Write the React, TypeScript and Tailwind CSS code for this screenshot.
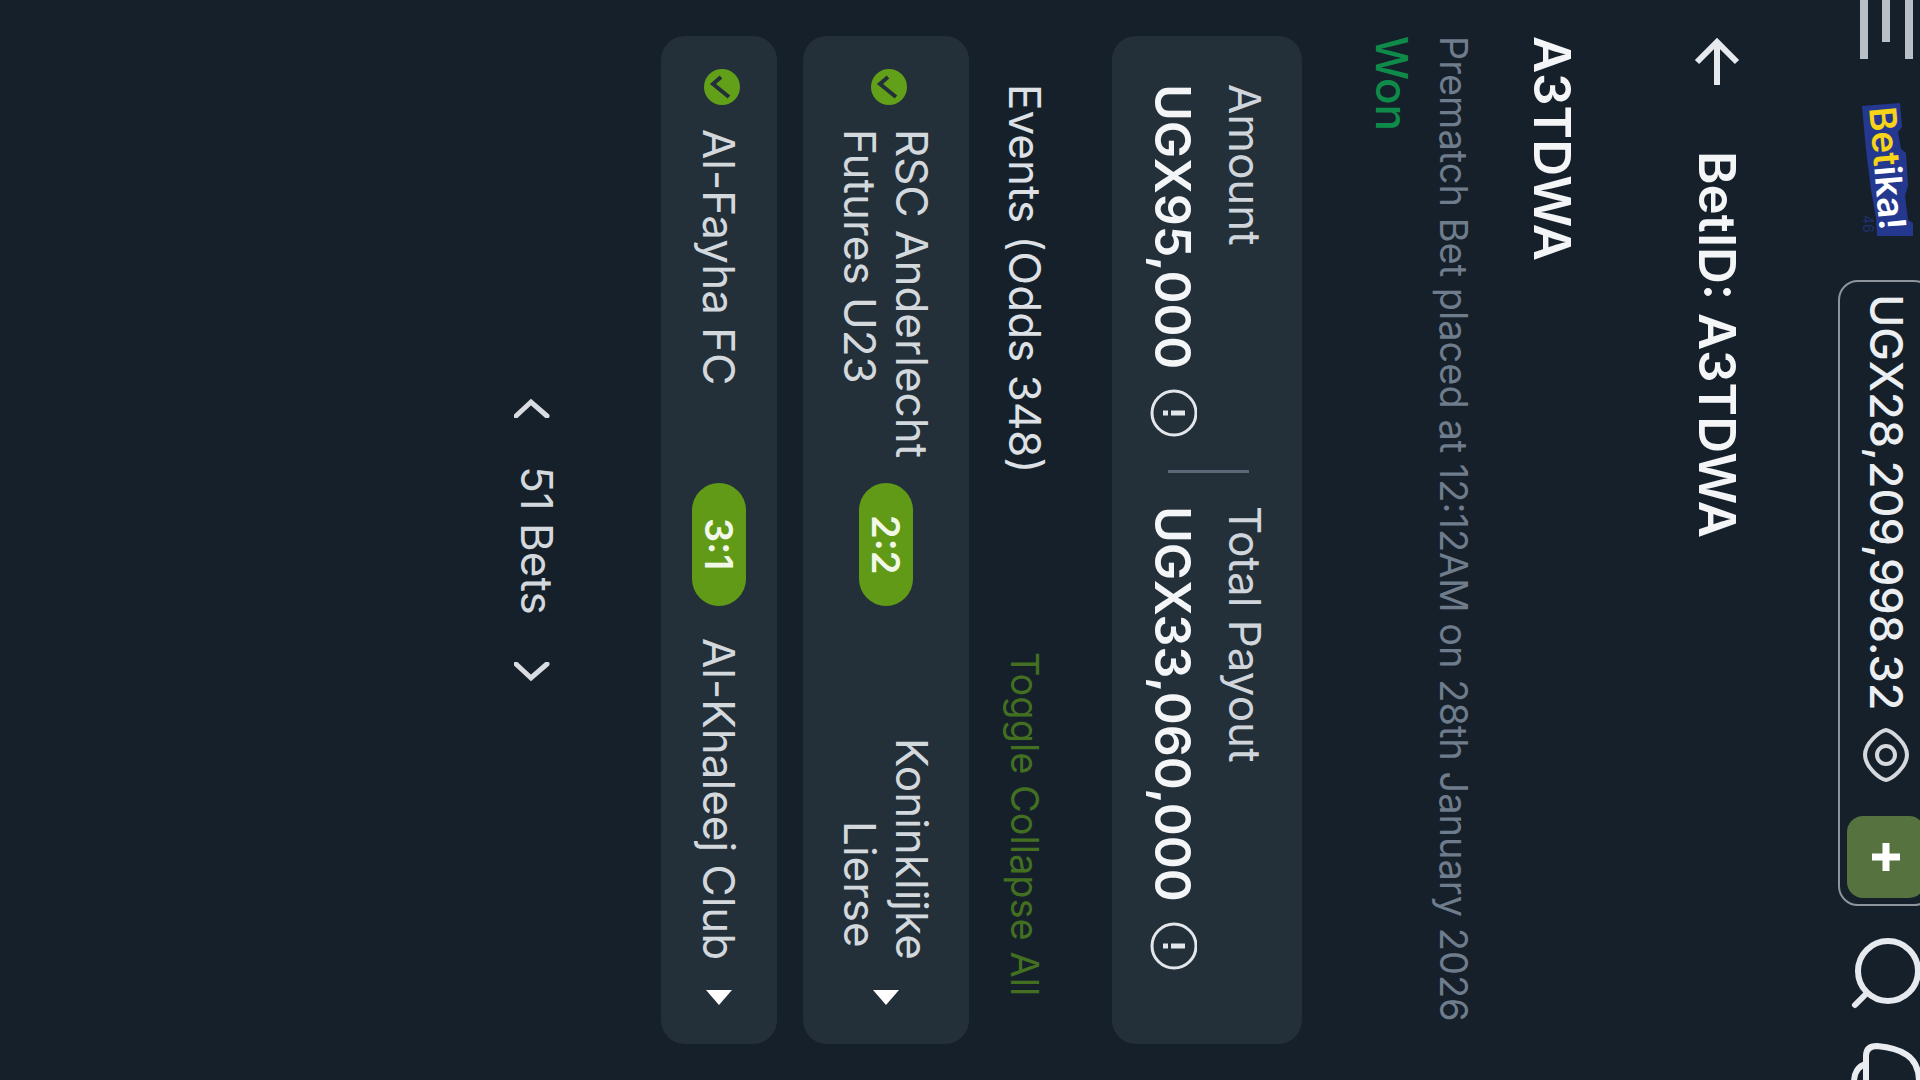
import type { ReactNode } from 'react';

const events = [
  { home: 'RSC Anderlecht Futures U23', away: 'Koninklijke Lierse\u00a0', score: '2:2' },
  { home: 'Al-Fayha FC', away: 'Al-Khaleej Club', score: '3:1' },
];

function Logo() {
  return (
    <svg width="60" height="140" viewBox="0 0 60 140" className="block shrink-0 [writing-mode:horizontal-tb]">
      <path
        d="M6 6 L44 3 L46 27 L42 32 L45 49 L50 53 L52 86 L49 96 L52 120 L57 123 L57 136 L21 136 L20 118 L15 90 L10 50 Z"
        fill="#24388f"
      />
      <text
        transform="translate(13 8) rotate(85)"
        fontFamily="Inter, sans-serif"
        fontSize="37"
        fontWeight="600"
        fill="#fff"
      >
        <tspan fill="#f7d417">Bet</tspan>ika!
      </text>
      <text transform="translate(7 115) rotate(90)" fontFamily="Inter, sans-serif" fontSize="14" fill="#20306f">
        46
      </text>
    </svg>
  );
}

function InfoIcon() {
  return (
    <svg width="48" height="48" viewBox="0 0 48 48" className="block shrink-0">
      <circle cx="25" cy="24" r="22" fill="none" stroke="#e3e7eb" strokeWidth="3" />
      <path d="M36 24 H22" stroke="#e3e7eb" strokeWidth="5" />
      <path d="M19 24 H14" stroke="#e3e7eb" strokeWidth="5" />
    </svg>
  );
}

function Header() {
  return (
    <header className="flex items-center w-[96px] -mr-[14px] text-[#eceff2]">
      <button aria-label="Menu" className="shrink-0">
        <svg width="54" height="59" viewBox="0 0 54 59" className="block">
          <path d="M5 0 V59 M27 0 V42 M50 0 V59" stroke="#b9bfc6" strokeWidth="8" />
        </svg>
      </button>

      <a href="/" aria-label="Betika" className="mt-[41px] shrink-0">
        <Logo />
      </a>

      {/* Balance */}
      <div className="flex items-center shrink-0 w-full mt-10 pt-3 pb-[6px] border-2 border-[#8d949c] rounded-[20px]">
        <span className="text-[45px] leading-[56px] font-medium">UGX28,209,998.32</span>
        <button aria-label="Hide balance" className="mt-[18px] shrink-0">
          <svg width="46" height="54" viewBox="0 0 46 54" fill="none" stroke="#d5d9de" strokeWidth="4" className="block">
            <path d="M23 2 C29 3 44 15 44 27 C44 39 29 51 23 52 C17 51 2 39 2 27 C2 15 17 3 23 2 Z" />
            <circle cx="23" cy="27" r="9" />
          </svg>
        </button>
        <button
          aria-label="Deposit"
          className="flex items-center justify-center shrink-0 w-[78px] h-[82px] mt-[34px] rounded-2xl bg-[#56733f]"
        >
          <svg width="28" height="28" viewBox="0 0 28 28" className="block">
            <path d="M14 0 V28 M0 14 H28" stroke="#fff" strokeWidth="7" />
          </svg>
        </button>
      </div>

      <button aria-label="Search" className="mt-8 shrink-0">
        <svg width="72" height="72" viewBox="0 0 72 72" fill="none" stroke="#e6e9ee" strokeWidth="6" className="block">
          <circle cx="38" cy="33" r="30" />
          <path d="M17 55 L5 67" strokeLinecap="round" />
        </svg>
      </button>

      <button aria-label="Notifications" className="mt-8 shrink-0">
        <svg width="72" height="80" viewBox="0 0 72 80" fill="none" stroke="#e9ecf0" strokeWidth="6" className="block">
          <path d="M16 40 V14 C16 7 20 4 27 4 C38 5 50 8 57 13 C66 19 69 28 69 40 C69 58 60 70 27 76 C20 76 16 73 16 66 Z" />
          <path d="M16 22 C8 24 4 31 4 40 C4 49 8 56 16 58" />
        </svg>
      </button>
    </header>
  );
}

function Stat({ label, value }: { label: string; value: string }) {
  return (
    <div>
      <div className="text-[44px] leading-[56px] text-[#cfd5da]">{label}</div>
      <div className="flex items-center gap-5 mr-[14px] text-[50px] leading-[60px] font-semibold text-[#f3f5f7]">
        {value}
        <button aria-label={`About ${label}`} className="shrink-0">
          <InfoIcon />
        </button>
      </div>
    </div>
  );
}

function Card({ className, children }: { className: string; children: ReactNode }) {
  return <div className={`flex items-center rounded-3xl bg-[#23303a] ${className}`}>{children}</div>;
}

function EventRow({ home, away, score }: { home: string; away: string; score: string }) {
  return (
    <Card className="pt-[33px] pb-[39px] pr-[31px] pl-[31px] text-[44px] leading-[52px] text-[#d3d8dd]">
      <svg width="42" height="36" viewBox="0 0 42 36" className="shrink-0">
        <circle cx="24" cy="18" r="18" fill="#62a01a" />
        <path d="M23 8 L15 15 L31 28" fill="none" stroke="#23303a" strokeWidth="4" />
      </svg>
      <div className="flex flex-1 items-center gap-5 mt-6">
        <span className="flex-1 basis-0">{home}</span>
        <span className="flex items-center justify-center shrink-0 w-[54px] h-[123px] rounded-full bg-[#609a17] text-[38px] leading-[48px] font-semibold text-[#f2f8e8]">
          {score}
        </span>
        <span className="flex-1 basis-0 text-end">{away}</span>
      </div>
      <button aria-label="Show event" className="mt-[30px] shrink-0">
        <svg width="26" height="15" viewBox="0 0 26 15" className="block">
          <path d="M0 0 H26 L13 15 Z" fill="#fff" />
        </svg>
      </button>
    </Card>
  );
}

export default function App() {
  return (
    <div className="h-screen w-full overflow-hidden bg-[#16202b] font-[Inter,sans-serif] [writing-mode:vertical-rl]">
      <Header />

      <main className="px-9">
        {/* Title bar */}
        <div className="flex items-center mr-[91px] text-[51px] leading-[60px] font-semibold text-[#f3f5f7]">
          <button aria-label="Back" className="shrink-0">
            <svg width="48" height="50" viewBox="0 0 48 50" fill="none" stroke="#e6e9ee" strokeWidth="6" className="block">
              <path d="M24 49 V6 M4 26 L24 6 L44 26" />
            </svg>
          </button>
          <h1 className="mt-[65px]">BetID: A3TDWA</h1>
        </div>

        <h2 className="mr-[105px] text-[51px] leading-[60px] font-semibold text-[#f3f5f7]">A3TDWA</h2>
        <p className="mr-[44px] text-[38px] leading-[48px] whitespace-nowrap text-[#6f7c8c]">
          Prematch Bet placed at 12:12AM on 28th January 2026
        </p>
        <p className="mr-[10px] text-[44px] leading-[56px] font-medium text-[#0e8a49]">Won</p>

        <Card className="mr-[62px] pt-12 pr-[29px] pl-[31px] gap-[33px]">
          <Stat label="Amount" value="UGX95,000" />
          <div className="w-[81px] h-[3px] bg-[#5c6977]" />
          <Stat label="Total Payout" value="UGX33,060,000" />
        </Card>

        {/* Events */}
        <div className="flex items-center justify-between mr-[59px] px-12">
          <h3 className="text-[44px] leading-[56px] text-[#dde1e5]">Events (Odds 348)</h3>
          <button className="text-[38px] leading-[48px] text-[#427020]">Toggle Collapse All</button>
        </div>
        <div className="flex flex-col gap-[26px] mr-7">
          {events.map((event) => (
            <EventRow key={event.home} {...event} />
          ))}
        </div>

        {/* Pager */}
        <div className="flex items-center justify-center gap-12 mr-24 text-[44px] leading-[56px] text-[#d3d8dd]">
          <button aria-label="Previous bet">
            <svg width="46" height="20" viewBox="0 0 46 20" fill="none" stroke="#d9dde2" strokeWidth="5" className="block">
              <path d="M2 18 L17 4 L33 18" strokeLinecap="round" />
            </svg>
          </button>
          <span>51 Bets</span>
          <button aria-label="Next bet">
            <svg width="46" height="20" viewBox="0 0 46 20" fill="none" stroke="#d9dde2" strokeWidth="5" className="block">
              <path d="M2 2 L17 16 L33 2" strokeLinecap="round" />
            </svg>
          </button>
        </div>
      </main>
    </div>
  );
}
